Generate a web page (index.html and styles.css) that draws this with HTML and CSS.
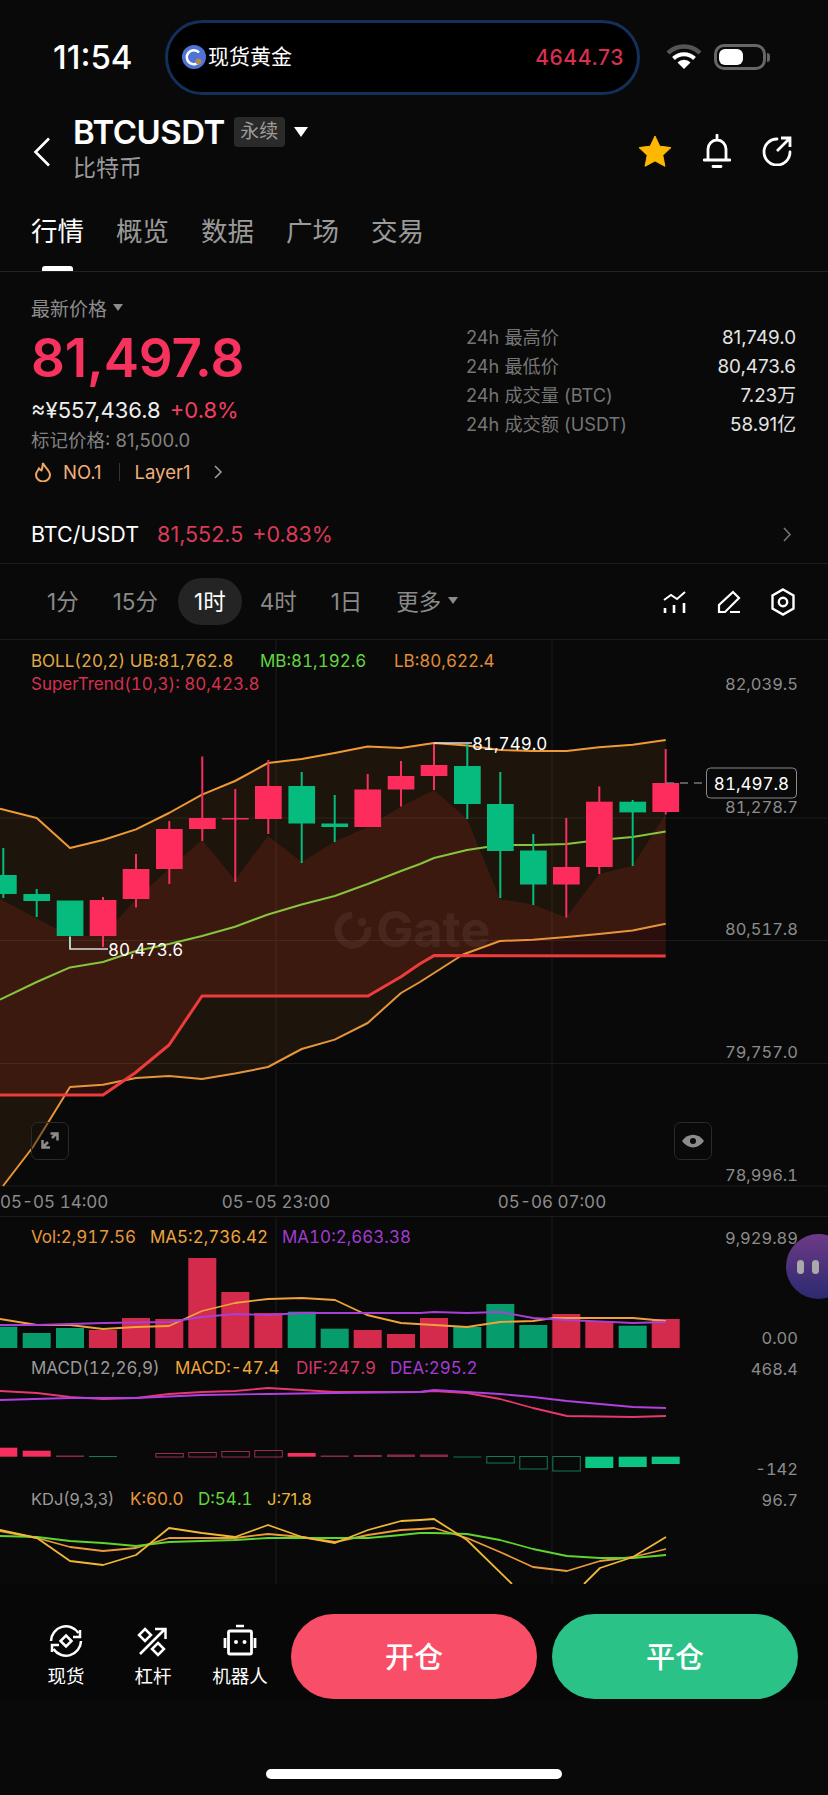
FILE: index.html
```html
<!DOCTYPE html>
<html lang="zh-CN">
<head>
  <meta charset="UTF-8">
  <meta name="viewport" content="width=device-width, initial-scale=1.0">
  <title>BTCUSDT 永续</title>
  <link rel="stylesheet" href="styles.css">
</head>
<body>
<div class="page">

  <!-- status bar -->
  <div class="status">
    <div class="time">11:54</div>
    <div class="island">
      <svg class="island-icon" width="24" height="26" viewBox="0 0 24 26">
        <circle cx="12" cy="13" r="12" fill="#4d74d6"/>
        <path d="M17 8.5a7 7 0 1 0 1 8" fill="none" stroke="#fff" stroke-width="2.6"/>
        <circle cx="16.5" cy="17.5" r="3" fill="#b08a4e"/>
      </svg>
      <span class="island-name">现货黄金</span>
      <span class="island-price">4644.73</span>
    </div>
    <svg class="wifi" width="36" height="26" viewBox="0 0 36 26">
      <path d="M2 9a23 23 0 0 1 32 0" fill="none" stroke="#555" stroke-width="4.5"/>
      <path d="M7.5 14.5a15 15 0 0 1 21 0" fill="none" stroke="#fff" stroke-width="4"/>
      <path d="M18 25l-6.5-6.5a9 9 0 0 1 13 0z" fill="#fff"/>
    </svg>
    <div class="battery"><div class="battery-level"></div></div>
    <div class="battery-tip"></div>
  </div>

  <!-- symbol header -->
  <div class="head">
    <svg class="back" width="18" height="30" viewBox="0 0 18 30">
      <path d="M16 1.500 2.500 15 16 28.500" fill="none" stroke="#fff" stroke-width="2.600"/>
    </svg>
    <div class="symbol">
      <div class="symbol-top">
        <span class="symbol-name">BTCUSDT</span>
        <span class="symbol-tag">永续</span>
        <span class="caret-white"></span>
      </div>
      <div class="symbol-sub">比特币</div>
    </div>
    <div class="head-icons">
      <svg width="34" height="32" viewBox="0 0 34 32">
        <path d="M17 1l4.800 10.200 11.200 1.400-8.200 7.700 2.100 11-9.900-5.400-9.900 5.400 2.100-11L1 12.600l11.200-1.400z" fill="#ffb800" stroke="#ffb800" stroke-linejoin="round"/>
      </svg>
      <svg width="28" height="34" viewBox="0 0 28 34">
        <path d="M14 1v4M5 25V15a9 9 0 0 1 18 0v10M1 26h26M10 32.500h8" fill="none" stroke="#fff" stroke-width="2.800" stroke-linecap="round"/>
      </svg>
      <svg width="30" height="30" viewBox="0 0 30 30">
        <path d="M15 3A13 13 0 1 0 28 16" fill="none" stroke="#fff" stroke-width="2.800" stroke-linecap="round"/>
        <path d="M15 15 28 2M19 2h9v9" fill="none" stroke="#fff" stroke-width="2.800"/>
      </svg>
    </div>
  </div>

  <!-- tabs -->
  <div class="tabs">
    <div class="tab tab-active">行情</div>
    <div class="tab">概览</div>
    <div class="tab">数据</div>
    <div class="tab">广场</div>
    <div class="tab">交易</div>
  </div>

  <!-- price summary -->
  <div class="summary">
    <div class="summary-left">
      <div class="price-label">最新价格 <span class="caret-grey"></span></div>
      <div class="price">81,497.8</div>
      <div class="price-cny">≈¥557,436.8 <span class="up">+0.8%</span></div>
      <div class="price-mark">标记价格: 81,500.0</div>
      <div class="rank">
        <svg width="18" height="20" viewBox="0 0 18 20">
          <path d="M9 1c1 4 7 7 7 12a7 6.500 0 0 1-14 0c0-3 2-4.500 3-6.500 1 1 2 2 2.500 2C8.500 6 8.500 3.500 9 1z" fill="none" stroke="#f0a464" stroke-width="2"/>
        </svg>
        <span class="rank-text">NO.1</span>
        <span class="rank-line"></span>
        <span class="rank-text">Layer1</span>
        <svg class="rank-more" width="10" height="14" viewBox="0 0 10 14">
          <path d="M2 1l6 6-6 6" fill="none" stroke="#a0a0a0" stroke-width="1.500"/>
        </svg>
      </div>
    </div>
    <div class="stats">
      <div class="stat"><span>24h 最高价</span><b>81,749.0</b></div>
      <div class="stat"><span>24h 最低价</span><b>80,473.6</b></div>
      <div class="stat"><span>24h 成交量 (BTC)</span><b>7.23万</b></div>
      <div class="stat"><span>24h 成交额 (USDT)</span><b>58.91亿</b></div>
    </div>
  </div>

  <!-- spot pair -->
  <div class="spot">
    <span class="spot-name">BTC/USDT</span>
    <span class="spot-price">81,552.5</span>
    <span class="spot-price">+0.83%</span>
    <svg class="spot-more" width="10" height="15" viewBox="0 0 10 15">
      <path d="M2 1l6 6.500-6 6.500" fill="none" stroke="#777" stroke-width="1.500"/>
    </svg>
  </div>

  <!-- interval bar -->
  <div class="intervals">
    <div class="interval">1分</div>
    <div class="interval">15分</div>
    <div class="interval interval-active">1时</div>
    <div class="interval">4时</div>
    <div class="interval">1日</div>
    <div class="interval">更多 <span class="caret-grey"></span></div>
    <div class="chart-tools">
      <svg width="24" height="24" viewBox="0 0 24 24">
        <path d="M1 10l7-5 6 4 8-7" fill="none" stroke="#fff" stroke-width="2"/>
        <path d="M2 18v5M11 15v8M21 13v10" fill="none" stroke="#fff" stroke-width="2.600"/>
      </svg>
      <svg width="24" height="24" viewBox="0 0 24 24">
        <path d="M2 22v-7L16 2l6 6L8 22zM13 22h10" fill="none" stroke="#fff" stroke-width="2.200"/>
      </svg>
      <svg width="24" height="28" viewBox="0 0 24 28">
        <path d="M12 1.500l10.500 6v13l-10.500 6-10.500-6v-13z" fill="none" stroke="#fff" stroke-width="2.400"/>
        <circle cx="12" cy="14" r="4.200" fill="none" stroke="#fff" stroke-width="2.400"/>
      </svg>
    </div>
  </div>

  <!-- chart canvas, y values are page coordinates -->
  <div class="chart">
    <svg class="chart-svg" width="828" height="944" viewBox="0 640 828 944">
      <path class="grid" d="M0 818H828M0 940.500H828M0 1063.500H828M0 1186H828M0 1216.500H828M276 640V1186M552 640V1186M276 1217V1584M552 1217V1584"/>

      <polygon class="band" points="0,808.700 36.700,818 70,848 103,840 136,829.400 169,813 202,794.600 235,781 268,763 301.700,759 334.700,753 367.700,746.500 401,748 434,743 467,745.400 500,750 533,751 566.700,751 599,747.300 632.700,744.700 665.700,740 665.700,923.800 632.700,930.400 599,934 566.700,937 533,939.700 500,941 463,954.500 410,989.600 401,993 367.700,1023 334.700,1039.600 301.700,1049 268,1067 235,1073.600 202,1079 169,1076 136,1078 103,1084.700 70,1087 33,1147 3,1186 0,1186"/>
      <polygon class="trend-fill" points="0,899 70,936 103,936 136,899 169,869 202,840 235,880 268,836 301.700,862 334.700,841.600 367.700,827 401,806.500 434,790 467,819 500,899 533,904.500 566,917.500 599,874 632.700,865.700 665.700,814 665.700,956 434,955.600 420,963.700 401,976.700 368,996 202,996 169,1045 135,1073 103,1095 0,1095"/>

      <g class="watermark">
        <circle cx="353" cy="930" r="15" fill="none" stroke="#fff" stroke-width="7" stroke-dasharray="72 22" transform="rotate(-10 353 930)"/>
        <circle cx="362" cy="922" r="4" fill="#fff"/>
        <text class="watermark-text" x="376" y="947">Gate</text>
      </g>

      <polyline class="line line-orange" points="0,808.700 36.700,818 70,848 103,840 136,829.400 169,813 202,794.600 235,781 268,763 301.700,759 334.700,753 367.700,746.500 401,748 434,743 467,745.400 500,750 533,751 566.700,751 599,747.300 632.700,744.700 665.700,740"/>
      <polyline class="line line-green" points="0,999.600 36.700,982 70,967.400 103,962 136,951 169,944 202,936 235,926.700 268,914.500 301.700,904.500 334.700,896 367.700,884 401,871 420,864 434,858 467,850 500,845 533,845 566.700,844 599,840 632.700,837 665.700,831.600"/>
      <polyline class="line line-orange-low" points="3,1186 33,1147 70,1087 103,1084.700 136,1078 169,1076 202,1079 235,1073.600 268,1067 301.700,1049 334.700,1039.600 367.700,1023 401,993 420,982 463,954.500 500,941 533,939.700 566.700,937 599,934 632.700,930.400 665.700,923.800"/>
      <polyline class="line line-trend" points="0,1095 103,1095 135,1073 169,1045 202,996 368,996 401,976.700 420,963.700 434,955.600 665.700,956"/>

      <path class="wick-down" d="M3.300 848V898M36.700 889V917M70 936V949M301.700 772V863M334.700 795V842M467.300 743.600V819M500.300 772V898M533.300 834V905M632.700 800V866"/>
      <path class="wick-up" d="M103 897V947M136 854V907.500M169.300 821V884M202.300 756.500V841M235.300 789V882M268.300 760V834M367.700 774V827M401 761V806.500M434 744V790M566.300 818V917.500M599.300 786.500V874M665.700 749V814.600"/>

      <rect class="body-down" x="-10" y="875" width="26.700" height="19"/>
      <rect class="body-down" x="23.400" y="894" width="26.700" height="7"/>
      <rect class="body-down" x="56.700" y="900.500" width="26.700" height="35.500"/>
      <rect class="body-up" x="89.700" y="900" width="26.700" height="36"/>
      <rect class="body-up" x="122.700" y="869" width="26.700" height="30"/>
      <rect class="body-up" x="156" y="829" width="26.700" height="40"/>
      <rect class="body-up" x="189" y="818" width="26.700" height="11"/>
      <rect class="body-up" x="222" y="818" width="26.700" height="1.500"/>
      <rect class="body-up" x="255" y="786" width="26.700" height="33"/>
      <rect class="body-down" x="288.400" y="786" width="26.700" height="37.500"/>
      <rect class="body-down" x="321.400" y="823.500" width="26.700" height="3.500"/>
      <rect class="body-up" x="354.400" y="789.500" width="26.700" height="37.500"/>
      <rect class="body-up" x="387.700" y="776" width="26.700" height="13.500"/>
      <rect class="body-up" x="420.700" y="765" width="26.700" height="11"/>
      <rect class="body-down" x="454" y="766" width="26.700" height="38"/>
      <rect class="body-down" x="487" y="804" width="26.700" height="47"/>
      <rect class="body-down" x="520" y="850.500" width="26.700" height="34"/>
      <rect class="body-up" x="553" y="867" width="26.700" height="17.500"/>
      <rect class="body-up" x="586" y="801.700" width="26.700" height="65.300"/>
      <rect class="body-down" x="619.400" y="801.700" width="26.700" height="10.700"/>
      <rect class="body-up" x="652.400" y="783" width="26.700" height="29"/>

      <!-- high, low and last price marks -->
      <path class="mark-line" d="M434 743H472M70 937V949H108"/>
      <text class="mark-text" x="472" y="750">81,749.0</text>
      <text class="mark-text" x="108" y="955.500">80,473.6</text>
      <path class="last-line" d="M666 783H706"/>
      <rect class="last-box" x="706.500" y="768" width="90" height="30" rx="4"/>
      <text class="last-text" x="751.500" y="789.500">81,497.8</text>

      <!-- legends -->
      <text class="legend c-boll" x="31" y="667">BOLL(20,2) UB:81,762.8</text>
      <text class="legend c-green" x="260" y="667">MB:81,192.6</text>
      <text class="legend c-lb" x="394" y="667">LB:80,622.4</text>
      <text class="legend c-red" x="31" y="690">SuperTrend(10,3): 80,423.8</text>

      <!-- price axis -->
      <text class="axis" x="798" y="690">82,039.5</text>
      <text class="axis" x="798" y="813">81,278.7</text>
      <text class="axis" x="798" y="935">80,517.8</text>
      <text class="axis" x="798" y="1058">79,757.0</text>
      <text class="axis" x="798" y="1181">78,996.1</text>

      <!-- floating chart buttons -->
      <rect class="chart-btn" x="31.500" y="1122.500" width="37" height="37" rx="6"/>
      <path class="expand" d="M52 1138l5-5M50.500 1133.500h7v7M48 1142l-5 5M42.500 1140v7.500h7.500"/>
      <rect class="chart-btn" x="674.500" y="1122.500" width="37" height="37" rx="6"/>
      <path class="eye" d="M682 1141c6-8.500 16-8.500 22 0-6 8.500-16 8.500-22 0z"/>
      <circle class="eye-dot" cx="693" cy="1141" r="3"/>

      <!-- time axis -->
      <text class="axis axis-time" x="0" y="1208">05-05 14:00</text>
      <text class="axis axis-time axis-mid" x="276" y="1208">05-05 23:00</text>
      <text class="axis axis-time axis-mid" x="552" y="1208">05-06 07:00</text>

      <!-- volume -->
      <text class="legend c-vol" x="31" y="1243">Vol:2,917.56</text>
      <text class="legend c-ma5" x="150" y="1243">MA5:2,736.42</text>
      <text class="legend c-purple" x="282" y="1243">MA10:2,663.38</text>
      <text class="axis" x="798" y="1244">9,929.89</text>
      <text class="axis" x="798" y="1344">0.00</text>

      <rect class="vol-down" x="-10.700" y="1326.700" width="28" height="21.300"/>
      <rect class="vol-down" x="22.700" y="1333" width="28" height="15"/>
      <rect class="vol-down" x="56" y="1328" width="28" height="20"/>
      <rect class="vol-up" x="89" y="1330" width="28" height="18"/>
      <rect class="vol-up" x="122" y="1318" width="28" height="30"/>
      <rect class="vol-up" x="155.300" y="1319" width="28" height="29"/>
      <rect class="vol-up" x="188.300" y="1258" width="28" height="90"/>
      <rect class="vol-up" x="221.300" y="1292" width="28" height="56"/>
      <rect class="vol-up" x="254.300" y="1313" width="28" height="35"/>
      <rect class="vol-down" x="287.700" y="1311.700" width="28" height="36.300"/>
      <rect class="vol-down" x="320.700" y="1328.700" width="28" height="19.300"/>
      <rect class="vol-up" x="353.700" y="1330" width="28" height="18"/>
      <rect class="vol-up" x="387" y="1334" width="28" height="14"/>
      <rect class="vol-up" x="420" y="1318" width="28" height="30"/>
      <rect class="vol-down" x="453.300" y="1327" width="28" height="21"/>
      <rect class="vol-down" x="486.300" y="1304" width="28" height="44"/>
      <rect class="vol-down" x="519.300" y="1325" width="28" height="23"/>
      <rect class="vol-up" x="552.300" y="1314" width="28" height="34"/>
      <rect class="vol-up" x="585.300" y="1321" width="28" height="27"/>
      <rect class="vol-down" x="618.700" y="1325.700" width="28" height="22.300"/>
      <rect class="vol-up" x="651.700" y="1319" width="28" height="29"/>

      <polyline class="thin thin-ma5" points="0,1319 37,1325 70,1325 103,1329 136,1327 169,1326 202,1311 235,1303 268,1299 302,1298 335,1300 367,1315 401,1323 434,1325 467,1327 500,1322 533,1321 553,1318 600,1318 633,1318 666,1321"/>
      <polyline class="thin thin-ma10" points="0,1325 37,1325 103,1323 169,1322 202,1317 235,1314 268,1315 302,1313 420,1313 434,1312 467,1313 500,1312 533,1318 567,1320 633,1323 666,1322"/>

      <!-- macd -->
      <text class="legend c-grey" x="31" y="1374">MACD(12,26,9)</text>
      <text class="legend c-ma5" x="175" y="1374">MACD:-47.4</text>
      <text class="legend c-dif" x="296" y="1374">DIF:247.9</text>
      <text class="legend c-purple" x="390" y="1374">DEA:295.2</text>
      <text class="axis" x="798" y="1375">468.4</text>
      <text class="axis" x="798" y="1475">-142</text>

      <polyline class="thin thin-dif" points="0,1391 37,1393 70,1397 103,1399 136,1398 169,1394 202,1392 235,1391 268,1388 302,1390 335,1392 420,1392 434,1391 467,1393 500,1399 533,1408 567,1416 633,1417 666,1416"/>
      <polyline class="thin thin-dea" points="0,1400 70,1398 136,1398 202,1395 268,1394 335,1393 420,1392 434,1390 467,1392 500,1394 533,1397 567,1401 600,1404 633,1407 666,1408"/>

      <rect class="hist-up" x="-10.700" y="1447.700" width="28" height="9"/>
      <rect class="hist-up" x="22.700" y="1450.700" width="28" height="6"/>
      <rect class="hist-dim-up" x="56" y="1455.500" width="28" height="1.500"/>
      <rect class="hist-dim-down" x="89" y="1456" width="28" height="1"/>
      <rect class="hist-open-up" x="155.800" y="1453.500" width="27.500" height="3.500"/>
      <rect class="hist-open-up" x="188.800" y="1452.500" width="27.500" height="4.500"/>
      <rect class="hist-open-up" x="221.800" y="1451.500" width="27.500" height="5.500"/>
      <rect class="hist-open-up" x="254.800" y="1450.500" width="27.500" height="6.500"/>
      <rect class="hist-up" x="287.700" y="1453" width="28" height="3.700"/>
      <rect class="hist-dim-up" x="320.700" y="1455.500" width="28" height="1.500"/>
      <rect class="hist-dim-up" x="353.700" y="1455" width="28" height="2"/>
      <rect class="hist-dim-up" x="387" y="1454.500" width="28" height="2.500"/>
      <rect class="hist-dim-up" x="420" y="1454.500" width="28" height="2.500"/>
      <rect class="hist-dim-down" x="453.300" y="1456.500" width="28" height="1"/>
      <rect class="hist-open-down" x="486.800" y="1456.500" width="27.500" height="6.500"/>
      <rect class="hist-open-down" x="519.800" y="1456.500" width="27.500" height="12.500"/>
      <rect class="hist-open-down" x="552.800" y="1456.500" width="27.500" height="14.500"/>
      <rect class="hist-down" x="585.300" y="1456.700" width="28" height="11.300"/>
      <rect class="hist-down" x="618.700" y="1456.700" width="28" height="10.300"/>
      <rect class="hist-down" x="651.700" y="1456.700" width="28" height="7.300"/>

      <!-- kdj -->
      <text class="legend legend-plain c-grey" x="31" y="1505">KDJ(9,3,3)</text>
      <text class="legend c-vol" x="130" y="1505">K:60.0</text>
      <text class="legend c-green" x="198" y="1505">D:54.1</text>
      <text class="legend legend-plain c-j" x="267" y="1505">J:71.8</text>
      <text class="axis" x="798" y="1506">96.7</text>

      <polyline class="thin thin-k" points="0,1531 37,1538 70,1547 103,1551 136,1548 169,1538 202,1538 235,1538 268,1534 302,1537 335,1542 368,1535 401,1530 420,1529 434,1528 467,1538 500,1552 533,1567 567,1571 600,1561 633,1557 666,1549"/>
      <polyline class="thin thin-d" points="0,1536 37,1537 70,1541 103,1543 136,1546 169,1542 202,1541 235,1540 268,1538 302,1538 368,1538 401,1535 420,1533 434,1533 467,1534 500,1540 533,1549 567,1556 600,1558 633,1558 666,1555"/>
      <polyline class="thin thin-j" points="0,1530 37,1538 70,1561 103,1565 136,1555 169,1528 202,1533 235,1537 268,1525 302,1537 335,1543 368,1530 401,1521 420,1520 434,1519 467,1540 512,1584"/>
      <polyline class="thin thin-j" points="584,1584 600,1568 633,1557 666,1537"/>
    </svg>
    <div class="float-ball">
      <span></span>
      <span></span>
    </div>
  </div>

  <!-- bottom actions -->
  <div class="actions">
    <div class="action-tools">
      <div class="action-tool">
        <svg width="34" height="34" viewBox="0 0 34 34">
          <path d="M2 17A15 15 0 0 1 29.500 9M32 17A15 15 0 0 1 4.500 25" fill="none" stroke="#fff" stroke-width="2.500"/>
          <path d="M31 6v7h-7M3 28v-7h7" fill="none" stroke="#fff" stroke-width="2.500"/>
          <path d="M17 11.500l5.500 5.500-5.500 5.500-5.500-5.500z" fill="none" stroke="#fff" stroke-width="2.500"/>
        </svg>
        <span>现货</span>
      </div>
      <div class="action-tool">
        <svg width="34" height="34" viewBox="0 0 34 34">
          <path d="M4 30 29 5M19 5h10.500v10" fill="none" stroke="#fff" stroke-width="2.500"/>
          <path d="M9 5l6 6-6 6-6-6zM22 19l6 6-6 6-6-6z" fill="none" stroke="#fff" stroke-width="2.500"/>
        </svg>
        <span>杠杆</span>
      </div>
      <div class="action-tool">
        <svg width="34" height="34" viewBox="0 0 34 34">
          <path d="M13 2h8" fill="none" stroke="#fff" stroke-width="2.500"/>
          <rect x="5.500" y="7" width="23" height="23" rx="1.500" fill="none" stroke="#fff" stroke-width="2.800"/>
          <path d="M2 14v10M32 14v10" fill="none" stroke="#fff" stroke-width="2.800"/>
          <circle cx="13" cy="18" r="2" fill="#fff"/>
          <circle cx="21.500" cy="18" r="2" fill="#fff"/>
        </svg>
        <span>机器人</span>
      </div>
    </div>
    <button class="trade trade-open">开仓</button>
    <button class="trade trade-close">平仓</button>
  </div>
  <div class="home-bar"></div>

</div>
</body>
</html>
```

FILE: styles.css
```css
html, body {
  margin: 0;
  background: #090909;
}
.page {
  width: 828px;
  height: 1795px;
  overflow: hidden;
  position: relative;
  color: #fff;
  font-family: Inter, "Noto Sans CJK SC", sans-serif;
}
svg {
  display: block;
  flex: none;
}

/* status bar */
.status {
  display: flex;
  align-items: center;
  height: 114px;
  padding-left: 54px;
}
.time {
  width: 111px;
  font-size: 33px;
  font-weight: 500;
  margin-left: -1px;
  margin-right: 1px;
}
.island {
  display: flex;
  align-items: center;
  box-sizing: border-box;
  width: 475px;
  height: 75px;
  padding: 0 13px 0 14px;
  background: #000;
  border: 3px solid #12305a;
  border-radius: 38px;
}
.island-name {
  margin-left: 2px;
  font-size: 21px;
  line-height: 26px;
}
.island-price {
  margin-left: auto;
  font-size: 21px;
  font-weight: 500;
  letter-spacing: .6px;
  color: #d8304e;
}
.wifi {
  margin-left: 26px;
}
.battery {
  box-sizing: border-box;
  width: 52px;
  height: 26px;
  margin-left: 12px;
  padding: 2px;
  border: 3px solid #666;
  border-radius: 10px;
}
.battery-level {
  width: 24px;
  height: 16px;
  background: #fff;
  border-radius: 6px;
}
.battery-tip {
  width: 3px;
  height: 9px;
  margin-left: 1px;
  background: #666;
  border-radius: 0 3px 3px 0;
}

/* header */
.head {
  display: flex;
  align-items: center;
  height: 76px;
  padding-left: 33px;
}
.back {
  margin-right: 22px;
}
.symbol {
  margin-bottom: 7px;
}
.symbol-top {
  display: flex;
  align-items: center;
  height: 34px;
}
.symbol-name {
  font-size: 33px;
  font-weight: 600;
  letter-spacing: -.5px;
}
.symbol-tag {
  width: 51px;
  height: 30px;
  margin-left: 9px;
  line-height: 30px;
  text-align: center;
  font-size: 19px;
  color: #9c9c9c;
  background: #2a2a2a;
  border-radius: 4px;
}
.caret-white {
  width: 0;
  height: 0;
  margin-left: 9px;
  border-left: 7px solid transparent;
  border-right: 7px solid transparent;
  border-top: 10px solid #fff;
}
.symbol-sub {
  margin-top: 4px;
  font-size: 23px;
  line-height: 30px;
  color: #9a9a9a;
}
.head-icons {
  display: flex;
  align-items: center;
  gap: 31px;
  margin-left: auto;
  margin-right: 36px;
  padding-bottom: 3px;
}

/* tabs */
.tabs {
  display: flex;
  gap: 32px;
  height: 81px;
  padding-left: 31px;
  border-bottom: 1px solid #222;
}
.tab {
  position: relative;
  box-sizing: border-box;
  height: 81px;
  padding-top: 20px;
  font-size: 26.500px;
  line-height: 43px;
  color: #9a9a9a;
}
.tab-active {
  color: #fff;
}
.tab-active::after {
  content: "";
  position: absolute;
  left: 11px;
  bottom: 0;
  width: 31px;
  height: 5px;
  background: #fff;
  border-radius: 3px 3px 0 0;
}

/* summary */
.summary {
  display: flex;
  justify-content: space-between;
  height: 211px;
  padding: 22px 32px 0 31px;
}
.price-label {
  display: flex;
  align-items: center;
  gap: 6px;
  height: 26px;
  font-size: 19px;
  color: #8c8c8c;
}
.caret-grey {
  display: inline-block;
  width: 0;
  height: 0;
  border-left: 5px solid transparent;
  border-right: 5px solid transparent;
  border-top: 7px solid #8c8c8c;
}
.price {
  margin-top: 8px;
  font-size: 53px;
  line-height: 60px;
  font-weight: 600;
  letter-spacing: -.2px;
  color: #f6325f;
}
.price-cny {
  margin-top: 7px;
  font-size: 22px;
  line-height: 30px;
  color: #eee;
}
.up {
  margin-left: 3px;
  color: #ef3e60;
}
.price-mark {
  font-size: 18.500px;
  line-height: 30px;
  color: #828282;
}
.rank {
  display: flex;
  align-items: center;
  height: 30px;
  margin-top: 2px;
  padding-left: 3px;
}
.rank-text {
  margin-left: 11px;
  font-size: 18.500px;
  color: #f2b07a;
}
.rank-line {
  width: 1px;
  height: 18px;
  margin-left: 17px;
  margin-right: 4px;
  background: #333;
}
.rank-more {
  margin-left: 23px;
}
.stats {
  width: 330px;
  padding-top: 29px;
}
.stat {
  display: flex;
  justify-content: space-between;
  height: 29px;
  line-height: 29px;
  font-size: 18.200px;
  color: #757575;
}
.stat b {
  font-size: 18.800px;
  font-weight: 400;
  color: #e4e4e4;
}

/* spot pair */
.spot {
  display: flex;
  align-items: center;
  height: 58px;
  padding-left: 31px;
  font-size: 21.500px;
  border-bottom: 1px solid #1c1c1c;
}
.spot-name {
  margin-right: 18px;
}
.spot-price {
  margin-right: 9px;
  color: #d83a58;
}
.spot-more {
  margin-left: auto;
  margin-right: 36px;
}

/* intervals */
.intervals {
  display: flex;
  align-items: center;
  height: 75px;
  padding-left: 31px;
  gap: 2px;
  border-bottom: 1px solid #1c1c1c;
}
.interval {
  display: flex;
  align-items: center;
  gap: 7px;
  box-sizing: border-box;
  height: 47px;
  padding: 0 16px 3px;
  font-size: 22.500px;
  color: #8a8a8a;
  border-radius: 24px;
}
.interval-active {
  margin-left: 2px;
  color: #fff;
  background: #242424;
}
.chart-tools {
  display: flex;
  align-items: center;
  gap: 30px;
  margin-left: auto;
  margin-right: 33px;
}

/* chart */
.chart {
  position: relative;
  height: 944px;
}
.chart-svg text {
  font-variant-numeric: tabular-nums;
}
.grid {
  fill: none;
  stroke: #1c1c1c;
  stroke-width: 1;
}
.band {
  fill: #f59a23;
  fill-opacity: .085;
}
.trend-fill {
  fill: #e8391f;
  fill-opacity: .15;
}
.watermark {
  opacity: .06;
}
.chart-svg .watermark-text {
  font-size: 50px;
  font-weight: 700;
  fill: #fff;
}
.line {
  fill: none;
  stroke-width: 2;
  stroke-linejoin: round;
}
.line-orange { stroke: #f09a37; }
.line-orange-low { stroke: #e8953a; }
.line-green { stroke: #86c53c; }
.line-trend {
  stroke: #ee3b3b;
  stroke-width: 3;
}
.wick-up {
  fill: none;
  stroke: #f6305e;
  stroke-width: 2;
}
.wick-down {
  fill: none;
  stroke: #05bb7e;
  stroke-width: 2;
}
.body-up { fill: #fd2c5c; }
.body-down { fill: #05bb7e; }
.mark-line {
  fill: none;
  stroke: #ddd;
  stroke-width: 1.500;
}
.mark-text {
  font-size: 17px;
  fill: #fff;
}
.last-line {
  fill: none;
  stroke: #777;
  stroke-dasharray: 8 6;
  stroke-width: 1.500;
}
.last-box {
  fill: #090909;
  stroke: #8a8a8a;
}
.last-text {
  font-size: 17px;
  fill: #fff;
  text-anchor: middle;
}
.legend {
  font-size: 17px;
}
.chart-svg .legend-plain {
  font-variant-numeric: normal;
  font-size: 16.500px;
}
.c-boll { fill: #e0a845; }
.c-green { fill: #62d640; }
.c-lb { fill: #e08c38; }
.c-red { fill: #d5304e; }
.c-vol { fill: #e8983c; }
.c-ma5 { fill: #eea63c; }
.c-purple { fill: #a23bd0; }
.c-grey { fill: #9a9a9a; }
.c-dif { fill: #d0386a; }
.c-j { fill: #e8b638; }
.axis {
  font-size: 16.500px;
  fill: #8c8c8c;
  text-anchor: end;
}
.axis-time {
  font-size: 17px;
  text-anchor: start;
}
.axis-mid { text-anchor: middle; }
.chart-btn {
  fill: #090909;
  fill-opacity: .4;
  stroke: #2a2a2a;
}
.expand {
  fill: none;
  stroke: #8c8c8c;
  stroke-width: 2.500;
}
.eye {
  fill: #8c8c8c;
}
.eye-dot {
  fill: #090909;
}
.vol-up { fill: #d42a4c; }
.vol-down { fill: #069c6c; }
.thin {
  fill: none;
  stroke-width: 1.800;
  stroke-linejoin: round;
}
.thin-ma5 { stroke: #f0a23c; }
.thin-ma10 { stroke: #a840d8; }
.thin-dif { stroke: #e8386f; }
.thin-dea { stroke: #b040e0; }
.thin-k { stroke: #ec9a3c; }
.thin-d { stroke: #5ed62e; }
.thin-j { stroke: #f0b834; }
.hist-up { fill: #f6305e; }
.hist-down { fill: #0cc583; }
.hist-dim-up { fill: #8a2a42; }
.hist-dim-down { fill: #127a57; }
.hist-open-up {
  fill: none;
  stroke: #a02a48;
}
.hist-open-down {
  fill: none;
  stroke: #127a57;
}
.float-ball {
  position: absolute;
  left: 786px;
  top: 594px;
  display: flex;
  gap: 8px;
  align-items: center;
  box-sizing: border-box;
  width: 65px;
  height: 65px;
  padding-left: 11px;
  border-radius: 50%;
  background: linear-gradient(#6e3a86, #2a2a70);
}
.float-ball span {
  width: 7px;
  height: 14px;
  background: #aaa;
  border-radius: 4px;
}

/* bottom actions */
.actions {
  display: flex;
  height: 85px;
  padding-top: 30px;
  padding-left: 23px;
  background: #070707;
}
.action-tools {
  display: flex;
  gap: 1px;
  margin-right: 8px;
}
.action-tool {
  display: flex;
  flex-direction: column;
  align-items: center;
  width: 86px;
  padding-top: 10px;
  font-size: 18.500px;
  line-height: 26px;
}
.action-tool span {
  margin-top: 5px;
}
.trade {
  width: 246px;
  height: 85px;
  padding: 0 0 3px;
  border: none;
  border-radius: 43px;
  color: #fff;
  font-family: inherit;
  font-size: 29px;
  font-weight: 500;
}
.trade-open {
  background: #f84e68;
}
.trade-close {
  margin-left: 15px;
  background: #2bc287;
}
.home-bar {
  width: 296px;
  height: 10px;
  margin: 70px auto 0;
  background: #fff;
  border-radius: 5px;
}
```
